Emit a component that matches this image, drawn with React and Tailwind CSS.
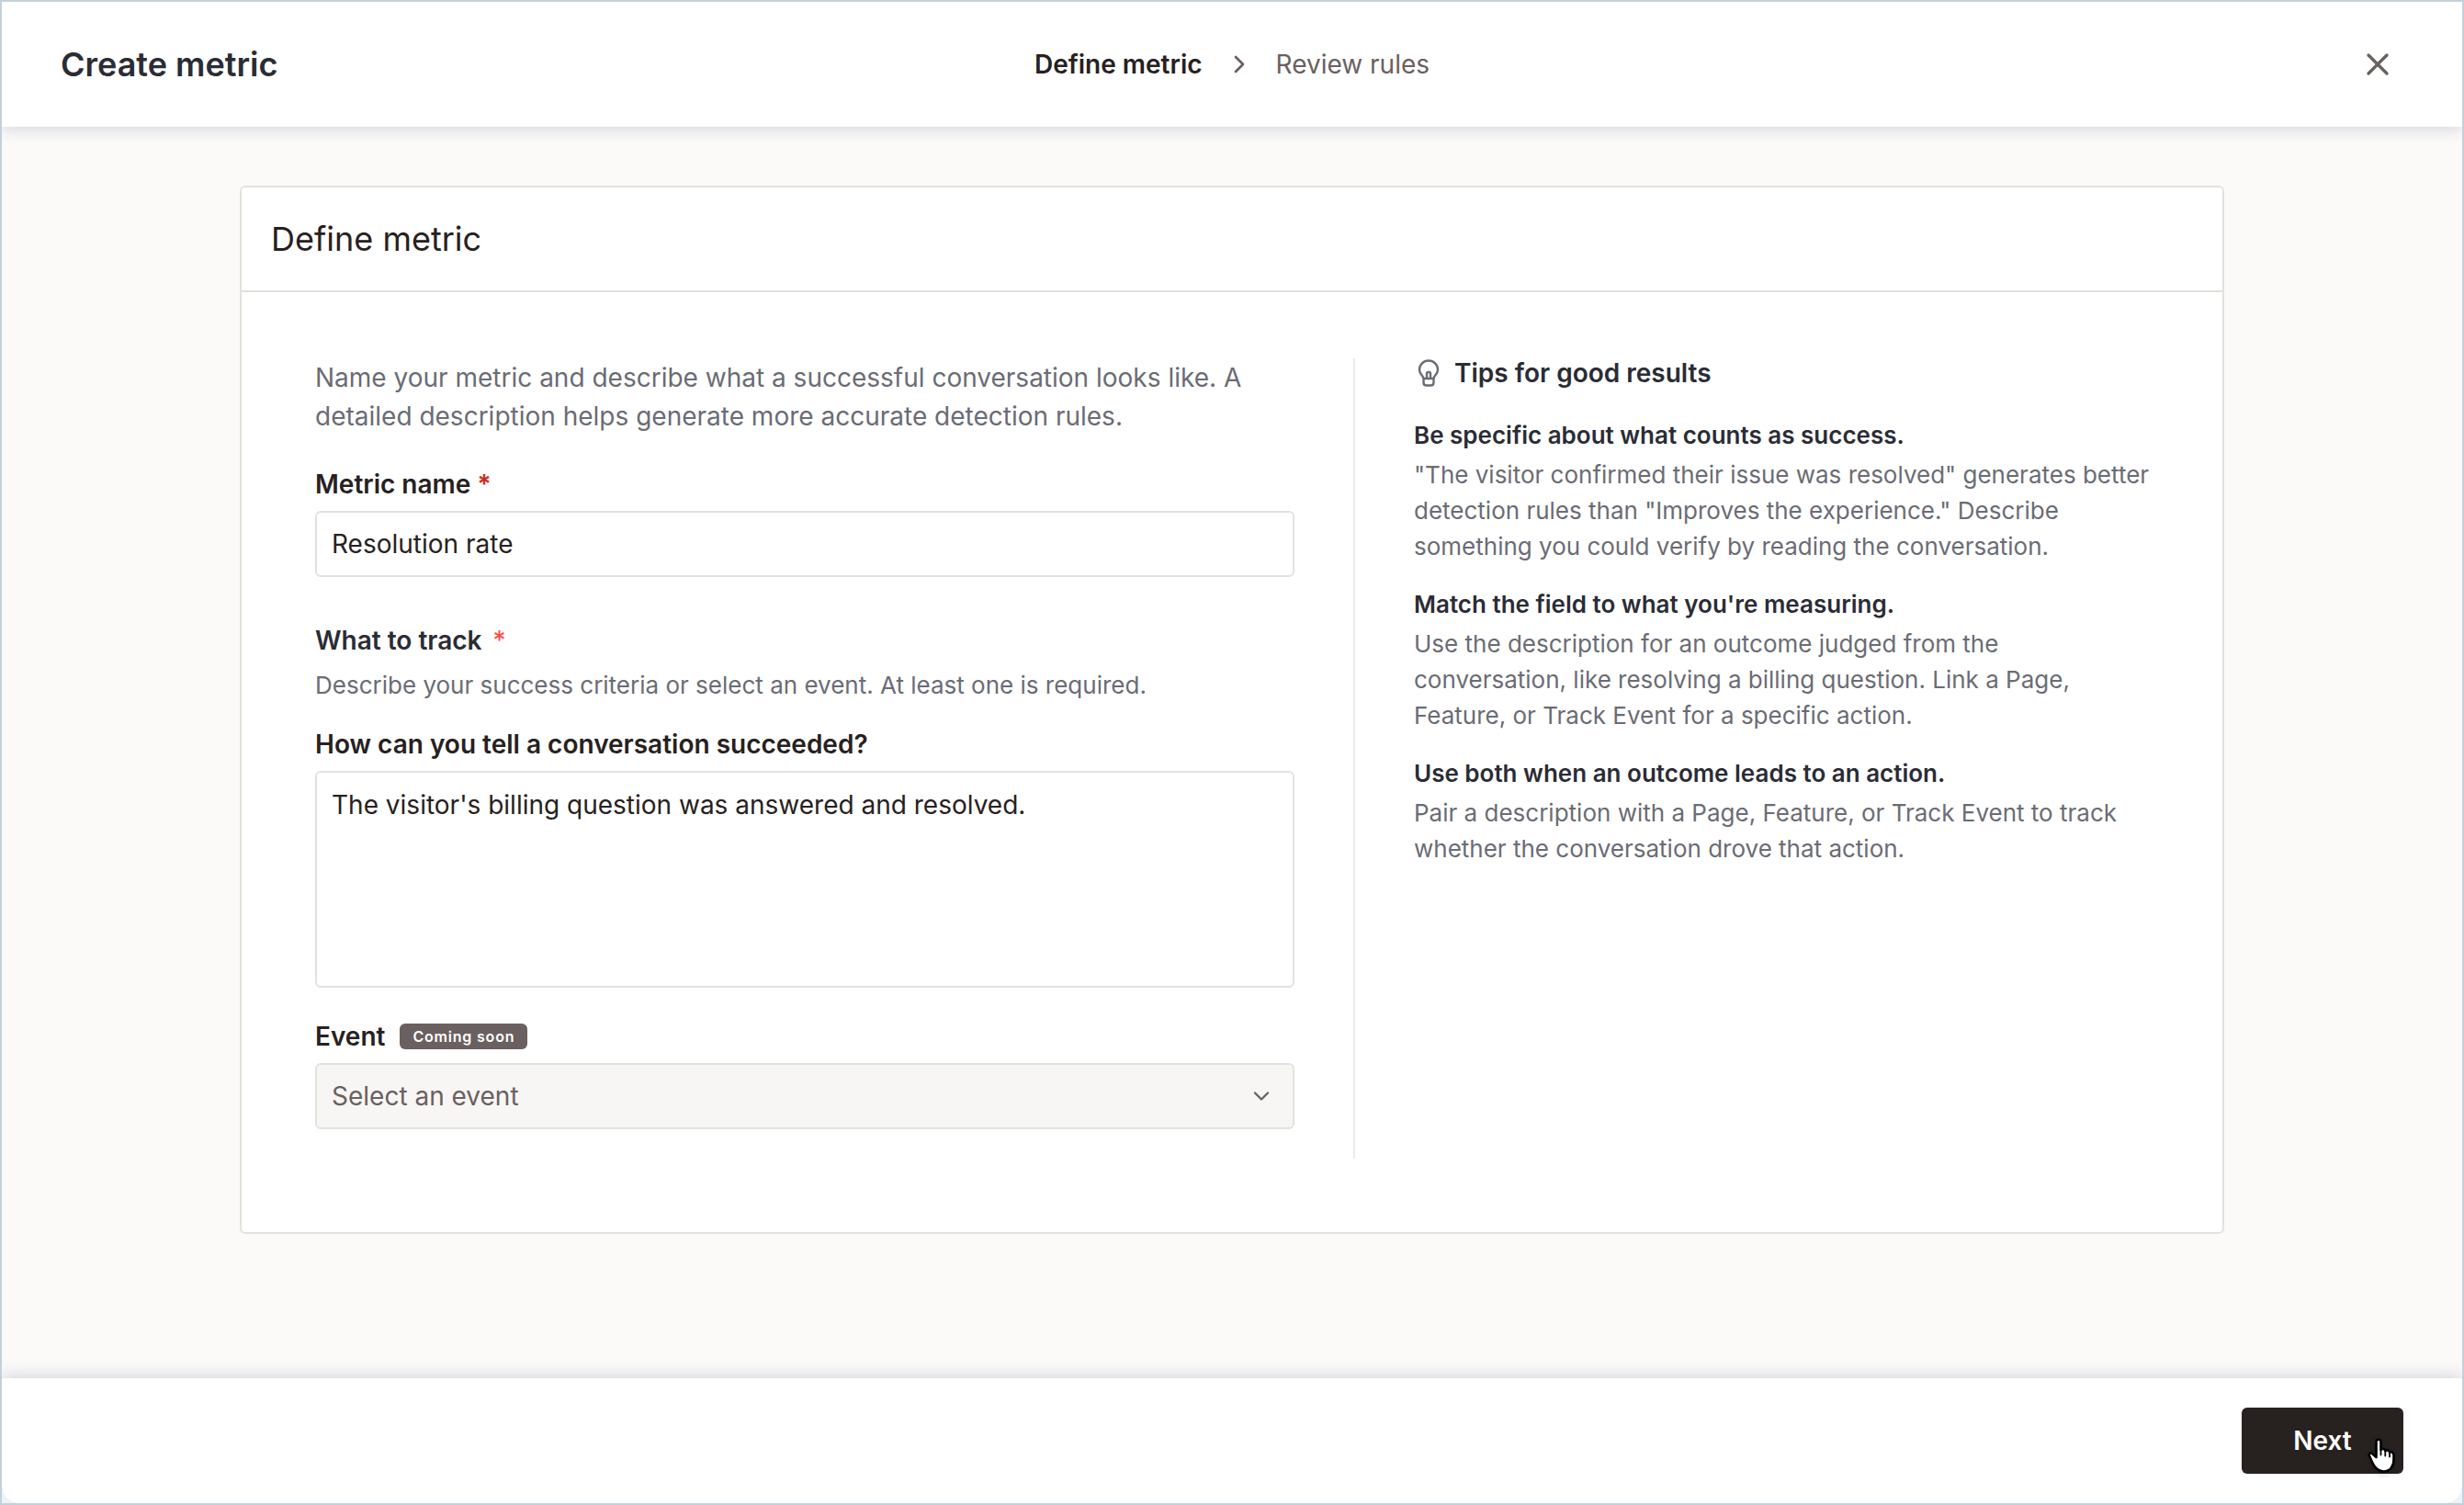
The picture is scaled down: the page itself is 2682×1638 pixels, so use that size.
import { useState } from 'react';
import { ChevronDown, ChevronRight, X } from 'lucide-react';

const tips = [
  {
    title: 'Be specific about what counts as success.',
    body: '"The visitor confirmed their issue was resolved" generates better detection rules than "Improves the experience." Describe something you could verify by reading the conversation.'
  },
  {
    title: "Match the field to what you're measuring.",
    body: 'Use the description for an outcome judged from the conversation, like resolving a billing question. Link a Page, Feature, or Track Event for a specific action.'
  },
  {
    title: 'Use both when an outcome leads to an action.',
    body: 'Pair a description with a Page, Feature, or Track Event to track whether the conversation drove that action.'
  }
];

function BulbIcon() {
  return (
    <svg
      className="size-8 text-[#6a6c75]"
      viewBox="0 0 32 32"
      fill="none"
      stroke="currentColor"
      strokeWidth="2.4"
      strokeLinejoin="round"
      aria-hidden="true"
    >
      <path d="M10.5 22C9.5 18 6 17.3 6 12.2C6 6.7 10.500 2.500 16 2.500S26 6.700 26 12.200C26 17.300 22.500 18 21.500 22" />
      <path d="M10.500 22H21.500V26.200C21.500 28.300 20.300 29.500 18.300 29.500H13.700C11.700 29.500 10.500 28.300 10.500 26.200Z" />
      <path d="M14 22V16.500C14 14.300 18 14.300 18 16.500V22" />
    </svg>
  );
}

function HandCursor() {
  return (
    <svg className="absolute right-2 bottom-0 h-10 w-8 drop-shadow-md" viewBox="0 0 32 40" aria-hidden="true">
      <path
        d="M10.5 22V5C10.5 2 15.5 2 15.5 5V14C17 12.2 20 12.8 20.3 15C22 13.8 24.5 14.5 25 16.5C27.5 15.8 29.500 17 29.500 19.500V25C29.500 32 25.500 37.500 18.500 37.500C12.500 37.500 9.500 34 7 29.500L3 20.500C2 17.500 5 16.500 6.500 18.500Z"
        fill="#fff"
        stroke="#000"
        strokeWidth="2.6"
        strokeLinejoin="round"
      />
      <path d="M15.5 14V19.5M20.3 15V20.5M25 16.5V21.5" stroke="#000" strokeWidth="1.8" strokeLinecap="round" />
    </svg>
  );
}

export default function App() {
  const [name, setName] = useState('Resolution rate');
  const [criteria, setCriteria] = useState("The visitor's billing question was answered and resolved.");

  return (
    <div className="min-h-screen bg-[#edf3f5] font-['Inter',sans-serif] text-[28px] leading-[42px] text-[#272120]">
      <div className="flex min-h-screen flex-col border-2 border-[#c3d1dc]">
        <div className="flex flex-1 flex-col overflow-hidden rounded-b-[20px] bg-[#fbfaf8]">
          <header className="relative z-10 grid h-[136px] grid-cols-[1fr_auto_1fr] items-center bg-white px-16 shadow-[0_2px_16px_#2f2f6e33]">
            <h1 className="text-[36px] font-semibold text-[#2a2c35]">Create metric</h1>
            <nav aria-label="Progress" className="flex items-center gap-6">
              <span aria-current="step" className="font-semibold">Define metric</span>
              <ChevronRight className="size-8 text-[#6a605f]" strokeWidth={2} />
              <span className="text-[#6a605f]">Review rules</span>
            </nav>
            <button
              type="button"
              aria-label="Close"
              className="flex size-14 items-center justify-center justify-self-end text-[#6a605f]"
            >
              <X className="size-10" strokeWidth={2} />
            </button>
          </header>

          <main className="flex-1 px-16 py-16">
            <section className="mx-auto max-w-[2160px] rounded-md border-2 border-[#e2e2dd] bg-white">
              <div className="flex h-[114px] items-center border-b-2 border-[#e2e2dd] px-8">
                <h2 className="text-[36px]">Define metric</h2>
              </div>

              <div className="flex gap-16 pt-[72px] pr-[72px] pb-20 pl-20">
                <form id="metric-form" className="flex-1 pb-8" onSubmit={(e) => e.preventDefault()}>
                  <p className="text-[#6a6c75]">
                    Name your metric and describe what a successful conversation looks like. A detailed description
                    helps generate more accurate detection rules.
                  </p>

                  <label htmlFor="metric-name" className="mt-8 mb-2 block font-semibold">
                    Metric name <span className="text-[#d4291c]">*</span>
                  </label>
                  <input
                    id="metric-name"
                    type="text"
                    value={name}
                    onChange={(e) => setName(e.target.value)}
                    className="block h-[72px] w-full rounded-md border-2 border-[#e2e2dd] px-4 outline-none"
                  />

                  <h3 className="mt-12 flex gap-3 font-semibold text-[#2a2c35]">
                    What to track <span className="font-normal text-[#ff4a4a]">*</span>
                  </h3>
                  <p className="mt-2 text-[26px] leading-[39px] text-[#6a6c75]">
                    Describe your success criteria or select an event. At least one is required.
                  </p>

                  <label htmlFor="criteria" className="mt-6 mb-2 block font-semibold">
                    How can you tell a conversation succeeded?
                  </label>
                  <textarea
                    id="criteria"
                    value={criteria}
                    onChange={(e) => setCriteria(e.target.value)}
                    className="block h-[236px] w-full resize-none rounded-md border-2 border-[#e2e2dd] px-4 py-3.5 outline-none"
                  />

                  <div className="mt-8 mb-2 flex items-center gap-4">
                    <label htmlFor="event" className="font-semibold">Event</label>
                    <span className="rounded-md bg-[#6a605f] px-3.5 text-base leading-7 font-semibold tracking-wider text-white">
                      Coming soon
                    </span>
                  </div>
                  <div className="relative">
                    <select
                      id="event"
                      disabled
                      className="block h-[72px] w-full appearance-none rounded-md border-2 border-[#e2e2dd] bg-[#f7f6f4] px-4 text-[#6a605f] opacity-100"
                    >
                      <option>Select an event</option>
                    </select>
                    <ChevronDown className="absolute top-[22px] right-[22px] size-7 text-[#6a605f]" strokeWidth={2} />
                  </div>
                </form>

                <aside className="w-[874px] border-l-2 border-[#eaeaf1] pl-16">
                  <div className="flex items-center gap-3">
                    <BulbIcon />
                    <h3 className="leading-8 font-semibold text-[#2a2c35]">Tips for good results</h3>
                  </div>
                  <div className="mt-8 flex flex-col gap-6 text-[26px] leading-[39px]">
                    {tips.map((tip) => (
                      <div key={tip.title} className="flex flex-col gap-1">
                        <h4 className="font-semibold text-[#2a2c35]">{tip.title}</h4>
                        <p className="text-[#6a6c75]">{tip.body}</p>
                      </div>
                    ))}
                  </div>
                </aside>
              </div>
            </section>
          </main>

          <footer className="relative z-10 flex h-[136px] items-center justify-end bg-white px-16 shadow-[0_-2px_16px_#2f2f6e33]">
            <div className="relative">
              <button
                type="submit"
                form="metric-form"
                className="block h-[72px] w-44 rounded-md bg-[#272120] font-semibold text-white"
              >
                Next
              </button>
              <HandCursor />
            </div>
          </footer>
        </div>
      </div>
    </div>
  );
}
